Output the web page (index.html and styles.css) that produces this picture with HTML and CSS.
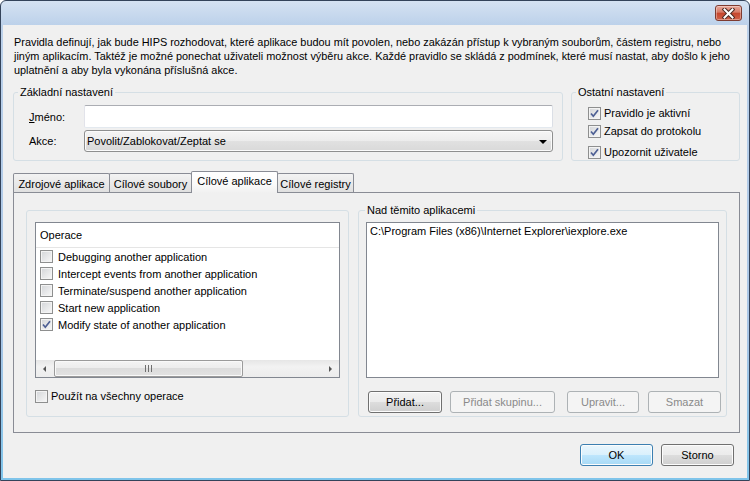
FILE: index.html
```html
<!DOCTYPE html>
<html lang="cs">
<head>
  <meta charset="UTF-8">
  <title>Pravidlo HIPS</title>
  <link rel="stylesheet" href="styles.css">
</head>
<body>

<div class="window">

  <div class="titlebar">
    <button class="close-btn" title="Zavřít">
      <svg width="13" height="11" viewBox="0 0 13 11">
        <path d="M2.5 1.5 L10.5 9.5 M10.5 1.5 L2.5 9.5" stroke="#4a2a24" stroke-width="4" stroke-linecap="square"/>
        <path d="M2.5 1.5 L10.5 9.5 M10.5 1.5 L2.5 9.5" stroke="#ffffff" stroke-width="2" stroke-linecap="square"/>
      </svg>
    </button>
  </div>

  <div class="client">

    <p class="desc">Pravidla definují, jak bude HIPS rozhodovat, které aplikace budou mít povolen, nebo zakázán přístup k vybraným souborům, částem registru, nebo<br>jiným aplikacím. Taktéž je možné ponechat uživateli možnost výběru akce. Každé pravidlo se skládá z podmínek, které musí nastat, aby došlo k jeho<br>uplatnění a aby byla vykonána příslušná akce.</p>

    <div class="top-row">
      <fieldset class="group group-basic">
        <legend>Základní nastavení</legend>
        <div class="basic-inner">
          <div class="field-row">
            <label class="field-label" for="ruleName"><u>J</u>méno:</label>
            <input type="text" id="ruleName" class="text-input">
          </div>
          <div class="field-row field-row-combo">
            <span class="field-label">Akce:</span>
            <div class="combo">
              <span class="combo-text">Povolit/Zablokovat/Zeptat se</span>
              <span class="combo-arrow"></span>
            </div>
          </div>
        </div>
      </fieldset>

      <fieldset class="group group-other">
        <legend>Ostatní nastavení</legend>
        <div class="other-inner">
          <div class="check-row">
            <span class="check"><svg width="11" height="11" viewBox="0 0 11 11"><path d="M2 5.5 L4.3 8.2 L9 2.2" fill="none" stroke="#4d5f94" stroke-width="1.7"/></svg></span>
            <span>Pravidlo je aktivní</span>
          </div>
          <div class="check-row">
            <span class="check"><svg width="11" height="11" viewBox="0 0 11 11"><path d="M2 5.5 L4.3 8.2 L9 2.2" fill="none" stroke="#4d5f94" stroke-width="1.7"/></svg></span>
            <span>Zapsat do protokolu</span>
          </div>
          <div class="check-row check-row-last">
            <span class="check"><svg width="11" height="11" viewBox="0 0 11 11"><path d="M2 5.5 L4.3 8.2 L9 2.2" fill="none" stroke="#4d5f94" stroke-width="1.7"/></svg></span>
            <span>Upozornit uživatele</span>
          </div>
        </div>
      </fieldset>
    </div>

    <div class="tabs">
      <div class="tab tab-src">Zdrojové aplikace</div>
      <div class="tab tab-files">Cílové soubory</div>
      <div class="tab tab-apps active">Cílové aplikace</div>
      <div class="tab tab-reg">Cílové registry</div>
    </div>

    <div class="tab-panel">

      <fieldset class="group group-ops">
        <div class="ops-inner">
          <div class="listview">
            <div class="lv-header">Operace</div>
            <div class="lv-rows">
              <div class="lv-row"><span class="check"></span><span>Debugging another application</span></div>
              <div class="lv-row"><span class="check"></span><span>Intercept events from another application</span></div>
              <div class="lv-row"><span class="check"></span><span>Terminate/suspend another application</span></div>
              <div class="lv-row"><span class="check"></span><span>Start new application</span></div>
              <div class="lv-row"><span class="check"><svg width="11" height="11" viewBox="0 0 11 11"><path d="M2 5.5 L4.3 8.2 L9 2.2" fill="none" stroke="#4d5f94" stroke-width="1.7"/></svg></span><span>Modify state of another application</span></div>
            </div>
            <div class="hscroll">
              <div class="sb-arrow"><span class="tri-left"></span></div>
              <div class="sb-track">
                <div class="sb-thumb"><span class="grip"></span></div>
              </div>
              <div class="sb-arrow"><span class="tri-right"></span></div>
            </div>
          </div>
          <div class="check-row apply-all">
            <span class="check"></span>
            <span>Použít na všechny operace</span>
          </div>
        </div>
      </fieldset>

      <fieldset class="group group-apps">
        <legend>Nad těmito aplikacemi</legend>
        <div class="apps-inner">
          <div class="listbox">
            <div class="lb-item">C:\Program Files (x86)\Internet Explorer\iexplore.exe</div>
          </div>
          <div class="apps-buttons">
            <button class="btn btn-add">Přidat...</button>
            <button class="btn btn-group" disabled>Přidat skupinu...</button>
            <button class="btn btn-edit" disabled>Upravit...</button>
            <button class="btn btn-del" disabled>Smazat</button>
          </div>
        </div>
      </fieldset>

    </div>

    <div class="dialog-buttons">
      <button class="btn btn-default">OK</button>
      <button class="btn">Storno</button>
    </div>

  </div>
</div>

</body>
</html>
```

FILE: styles.css
```css
* {
  box-sizing: border-box;
}

body {
  margin: 0;
  background: #ffffff;
  font-family: 'Liberation Sans', Arial, sans-serif;
  font-size: 11px;
  color: #000000;
}

.window {
  width: 750px;
  height: 481px;
  border: 1px solid #34435a;
  border-radius: 6px 6px 0 0;
  padding: 0 2px 2px;
  background: linear-gradient(#d5e2f2, #bcd1ea 24px, #a9c6e6 70%, #7fc4ea);
  display: flex;
  flex-direction: column;
}

.titlebar {
  height: 24px;
  display: flex;
  justify-content: flex-end;
  align-items: flex-start;
  padding: 4px 5px 0 0;
}

.close-btn {
  width: 27px;
  height: 16px;
  padding: 0;
  border: 1px solid #7e3b30;
  border-radius: 3px;
  background: linear-gradient(#e8a89a, #d67a66 45%, #c5452c 50%, #d0624a);
  box-shadow: inset 0 0 0 1px rgba(255, 255, 255, 0.35);
  display: flex;
  align-items: center;
  justify-content: center;
}

.client {
  flex: 1;
  background: #f0f0f0;
  padding: 10px 6px 0 10px;
  display: flex;
  flex-direction: column;
}

.desc {
  margin: 0;
  padding-left: 1px;
  line-height: 14px;
  font-size: 10.9px;
  white-space: nowrap;
}

/* group boxes */

.group {
  margin: 0;
  padding: 0;
  border: 1px solid #d5dfe5;
  border-radius: 3px;
  min-width: 0;
}

.group legend {
  padding: 0 2px;
  margin-left: 4px;
  line-height: 14px;
}

.top-row {
  display: flex;
  gap: 8px;
  margin-top: 8px;
}

.group-basic {
  width: 550px;
  height: 76px;
}

.group-other {
  width: 169px;
  height: 76px;
}

.basic-inner {
  padding: 6px 9px 0 15px;
}

.field-row {
  display: flex;
  align-items: center;
  height: 23px;
}

.field-row-combo {
  height: 22px;
  margin-top: 2px;
}

.field-label {
  width: 55px;
}

.text-input {
  width: 469px;
  height: 23px;
  border: 1px solid;
  border-color: #abadb3 #dbdfe6 #e3e9ef #e2e3ea;
  border-radius: 2px;
  background: #ffffff;
  font: inherit;
}

.combo {
  width: 469px;
  height: 22px;
  border: 1px solid #8e8f8f;
  border-radius: 3px;
  background: linear-gradient(#f5f5f5, #ececec 50%, #e1e1e1 50%, #d9d9d9);
  box-shadow: inset 0 0 0 1px #fbfbfb;
  display: flex;
  align-items: center;
  justify-content: space-between;
  padding: 0 5px 0 2px;
}

.combo-arrow {
  width: 0;
  height: 0;
  border-left: 4px solid transparent;
  border-right: 4px solid transparent;
  border-top: 4px solid #000000;
  margin-top: 1px;
}

.other-inner {
  padding: 6px 0 0 16px;
}

.check-row {
  display: flex;
  align-items: center;
  gap: 3px;
  height: 16px;
}

.check-row + .check-row {
  margin-top: 2px;
}

.other-inner .check-row-last {
  margin-top: 5px;
}

.check {
  width: 13px;
  height: 13px;
  flex: none;
  border: 1px solid #8e8f8f;
  background: linear-gradient(135deg, #d3d5d8, #f8f8f8);
  box-shadow: inset 0 0 0 1px #f3f3f3;
  display: flex;
  align-items: center;
  justify-content: center;
}

/* tabs */

.tabs {
  display: flex;
  align-items: flex-end;
  height: 21px;
  margin-top: 10px;
  position: relative;
  z-index: 1;
}

.tab {
  height: 19px;
  border: 1px solid #898c95;
  border-bottom: none;
  border-radius: 2px 2px 0 0;
  background: linear-gradient(#f3f3f3, #e9e9e9 50%, #e0e0e0);
  display: flex;
  align-items: center;
  justify-content: center;
  padding-top: 1px;
}

.tab + .tab {
  margin-left: -1px;
}

.tab-src {
  width: 97px;
}

.tab-files {
  width: 83px;
}

.tab-apps {
  width: 87px;
}

.tab-reg {
  width: 77px;
}

.tab.active {
  height: 22px;
  margin-bottom: -1px;
  background: linear-gradient(#ffffff, #fafafa 60%, #f0f0f0);
  padding-top: 0;
  padding-bottom: 3px;
  position: relative;
}

.tab-panel {
  width: 727px;
  height: 241px;
  border: 1px solid #898c95;
  background: #f0f0f0;
  display: flex;
  align-items: flex-start;
  gap: 9px;
  padding: 10px 12px 0 12px;
}

.group-ops {
  width: 323px;
  height: 207px;
  margin-top: 7px;
}

.ops-inner {
  padding: 11px 8px 0 8px;
}

.listview {
  height: 156px;
  border: 1px solid #828790;
  background: #ffffff;
  display: flex;
  flex-direction: column;
}

.lv-header {
  height: 25px;
  border-bottom: 1px solid #e5e5e5;
  padding-left: 4px;
  display: flex;
  align-items: center;
}

.lv-rows {
  flex: 1;
}

.lv-row {
  height: 17px;
  display: flex;
  align-items: center;
  gap: 5px;
  padding-left: 4px;
}

.hscroll {
  height: 17px;
  display: flex;
  background: linear-gradient(#e6e6e6, #f2f2f2 40%, #ececec);
}

.sb-arrow {
  width: 17px;
  display: flex;
  align-items: center;
  justify-content: center;
}

.tri-left {
  border-top: 3px solid transparent;
  border-bottom: 3px solid transparent;
  border-right: 3px solid #555555;
}

.tri-right {
  border-top: 3px solid transparent;
  border-bottom: 3px solid transparent;
  border-left: 3px solid #555555;
}

.sb-track {
  flex: 1;
  padding: 0 1px;
}

.sb-thumb {
  width: 189px;
  height: 17px;
  border: 1px solid #9b9b9b;
  border-radius: 2px;
  background: linear-gradient(#f4f4f4, #ececec 50%, #dcdcdc 50%, #e2e2e2);
  box-shadow: inset 0 0 0 1px #f9f9f9;
  display: flex;
  align-items: center;
  justify-content: center;
}

.grip {
  width: 7px;
  height: 7px;
  background: repeating-linear-gradient(90deg, #6f6f6f 0, #6f6f6f 1px, transparent 1px, transparent 3px);
}

.apply-all {
  margin-top: 10px;
}

.group-apps {
  width: 369px;
  height: 214px;
}

.group-apps legend {
  margin-left: 6px;
}

.apps-inner {
  padding: 5px 0 0 7px;
}

.listbox {
  width: 353px;
  height: 156px;
  border: 1px solid #828790;
  background: #ffffff;
  padding: 1px 3px;
}

.lb-item {
  line-height: 14px;
}

.apps-buttons {
  display: flex;
  margin-top: 13px;
  padding-left: 2px;
}

/* buttons */

.btn {
  height: 22px;
  padding: 0;
  border: 1px solid #707070;
  border-radius: 3px;
  background: linear-gradient(#f2f2f2, #ebebeb 50%, #dddddd 50%, #cfcfcf);
  box-shadow: inset 0 0 0 1px #fcfcfc;
  font: inherit;
  color: #000000;
}

.btn[disabled] {
  border-color: #adb2b5;
  background: #f4f4f4;
  box-shadow: none;
  color: #8a8a8a;
}

.btn-add {
  width: 74px;
}

.btn-group {
  width: 105px;
  margin-left: 8px;
}

.btn-edit {
  width: 72px;
  margin-left: 12px;
}

.btn-del {
  width: 73px;
  margin-left: 9px;
}

.btn-default {
  border-color: #3c7fb1;
  background: linear-gradient(#eaf6fd, #d9f0fc 50%, #bee6fd 50%, #a7d9f5);
}

.dialog-buttons {
  display: flex;
  justify-content: flex-end;
  gap: 8px;
  margin-top: 11px;
  padding-right: 7px;
}

.dialog-buttons .btn {
  width: 73px;
}
```
